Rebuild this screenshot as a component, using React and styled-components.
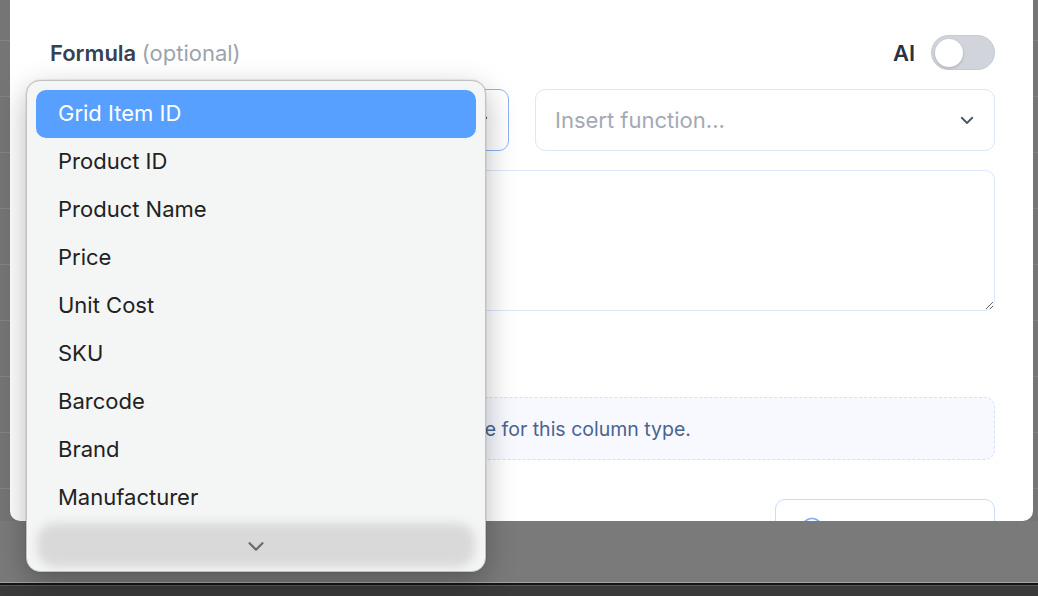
import React from "react";
import styled, { createGlobalStyle } from "styled-components";

const GlobalStyle = createGlobalStyle`
  html, body {
    margin: 0;
    padding: 0;
    background: #7a7a7a;
    font-family: Inter, "Noto Sans", "Liberation Sans", sans-serif;
  }
  * { box-sizing: border-box; }
`;

const Screen = styled.div`
  position: relative;
  width: 1038px;
  height: 596px;
  overflow: hidden;
  display: flex;
  flex-direction: column;
`;

const Backdrop = styled.div`
  flex: 1;
  display: flex;
  flex-direction: column;
  background: #7a7a7a;
`;

const GridRows = styled.div`
  height: 521px;
  flex-shrink: 0;
  display: flex;
  background-color: #757575;
  background-image: repeating-linear-gradient(
    to bottom,
    transparent 0px,
    transparent 40px,
    #838383 40px,
    #838383 41px,
    transparent 41px,
    transparent 56px
  );
`;

const Dock = styled.div`
  height: 14px;
  flex-shrink: 0;
  background: #3a3a3a;
  border-top: 1px solid #a4a4a4;
  box-shadow: inset 0 1px 0 #141414, inset 0 2px 0 #141414, inset 0 3px 0 #575757;
`;

const Modal = styled.div`
  margin-left: 10px;
  width: 1023px;
  height: 521px;
  background: #ffffff;
  border-radius: 0 0 10px 10px;
  padding: 35px 38px 0 40px;
  display: flex;
  flex-direction: column;
  overflow: hidden;

  & > * {
    flex-shrink: 0;
  }
`;

const HeaderRow = styled.div`
  display: flex;
  align-items: center;
  justify-content: space-between;
  height: 35px;
`;

const Label = styled.div`
  font-size: 22px;
  font-weight: 600;
  color: #374151;
`;

const Muted = styled.span`
  font-weight: 400;
  color: #9ca3af;
`;

const AiToggle = styled.div`
  display: flex;
  align-items: center;
  gap: 16px;
  font-size: 22px;
  font-weight: 600;
  color: #2b3140;
`;

const Switch = styled.div`
  width: 64px;
  height: 35px;
  border-radius: 18px;
  background: #d1d5db;
  border: 1px solid #c3cbd9;
  padding: 3px;
  display: flex;
  align-items: center;
`;

const Knob = styled.div`
  width: 28px;
  height: 28px;
  border-radius: 50%;
  background: #ffffff;
  box-shadow: 0 1px 3px rgba(0, 0, 0, 0.2);
`;

const SelectRow = styled.div`
  margin-top: 19px;
  display: grid;
  grid-template-columns: 459px 1fr;
  gap: 26px;
  height: 62px;
`;

const SelectBox = styled.div`
  border: 1px solid ${(p) => (p.$focused ? "#8fb4f4" : "#dbe6fb")};
  border-radius: 10px;
  display: flex;
  align-items: center;
  justify-content: space-between;
  padding: 0 18px 0 19px;
  font-size: 22px;
  color: ${(p) => (p.$placeholder ? "#a3a9b6" : "#1f2937")};
`;

const Chevron = ({ color = "#4b5563", size = 18 }) => (
  <svg width={size} height={size} viewBox="0 0 24 24" fill="none">
    <path d="M5 9l7 7 7-7" stroke={color} strokeWidth="2.4" strokeLinecap="round" strokeLinejoin="round" />
  </svg>
);

const FormulaInput = styled.textarea`
  margin-top: 19px;
  height: 141px;
  width: 100%;
  resize: vertical;
  border: 1px solid #dbe6fb;
  border-radius: 10px;
  padding: 14px 18px;
  font-family: "DejaVu Sans Mono", monospace;
  font-size: 16px;
  color: #1f2937;
  outline: none;
`;

const Spacer = styled.div`
  height: 86px;
`;

const InfoBox = styled.div`
  height: 63px;
  border: 1px dashed #d5e1f8;
  border-radius: 10px;
  background: #f7f9ff;
  display: flex;
  align-items: center;
  padding: 0 20px;
  font-size: 19.5px;
  color: #4a6390;
  white-space: nowrap;
`;

const Footer = styled.div`
  margin-top: 39px;
  display: flex;
  justify-content: flex-end;
`;

const GhostButton = styled.div`
  width: 220px;
  height: 58px;
  border: 1px solid #cddcf7;
  border-radius: 10px;
  display: flex;
  align-items: center;
  gap: 10px;
  padding: 0 0 0 25px;
  font-size: 18px;
  color: #3b5b94;
`;

const Menu = styled.div`
  position: absolute;
  left: 26px;
  top: 80px;
  width: 460px;
  height: 492px;
  border-radius: 14px;
  background: #f4f5f5;
  border: 1px solid #c2c2c2;
  box-shadow: 0 10px 30px rgba(0, 0, 0, 0.28), 0 0 0 0.5px rgba(0, 0, 0, 0.1);
  padding: 9px 9px 0 9px;
  overflow: hidden;
  font-family: Inter, "Noto Sans", sans-serif;
`;

const Option = styled.div`
  height: 48px;
  display: flex;
  align-items: center;
  padding: 0 0 3px 22px;
  font-size: 22px;
  border-radius: 10px;
  color: ${(p) => (p.$active ? "#ffffff" : "#222222")};
  background: ${(p) => (p.$active ? "#58a0ff" : "transparent")};
`;

const ScrollShade = styled.div`
  position: absolute;
  left: 0;
  right: 0;
  bottom: 0;
  height: 54px;
  display: flex;
  align-items: center;
  justify-content: center;
  padding-top: 4px;

  &::before {
    content: "";
    position: absolute;
    left: 10px;
    right: 10px;
    top: 6px;
    bottom: 4px;
    border-radius: 18px;
    background: #d9d9d9;
    filter: blur(5px);
  }
`;

const ScrollArrow = styled.div`
  position: relative;
  display: flex;
`;

const fields = [
  "Grid Item ID",
  "Product ID",
  "Product Name",
  "Price",
  "Unit Cost",
  "SKU",
  "Barcode",
  "Brand",
  "Manufacturer",
];

export default function App() {
  return (
    <>
      <GlobalStyle />
      <Screen>
        <Backdrop>
          <GridRows>
            <Modal>
              <HeaderRow>
                <Label>
                  Formula <Muted>(optional)</Muted>
                </Label>
                <AiToggle>
                  AI
                  <Switch>
                    <Knob />
                  </Switch>
                </AiToggle>
              </HeaderRow>

              <SelectRow>
                <SelectBox $focused>
                  <span />
                  <Chevron />
                </SelectBox>
                <SelectBox $placeholder>
                  Insert function...
                  <Chevron />
                </SelectBox>
              </SelectRow>

              <FormulaInput defaultValue="" spellCheck={false} />

              <Spacer />

              <InfoBox>Live preview of formula results is not available for this column type.</InfoBox>

              <Footer>
                <GhostButton>
                  <svg width="22" height="22" viewBox="0 0 24 24" fill="none">
                    <circle cx="12" cy="12" r="10.5" stroke="#8fb0ee" strokeWidth="2" />
                  </svg>
                  Test formula
                </GhostButton>
              </Footer>
            </Modal>
          </GridRows>
        </Backdrop>
        <Dock />

        <Menu>
          {fields.map((f, i) => (
            <Option key={f} $active={i === 0}>
              {f}
            </Option>
          ))}
          <ScrollShade>
            <ScrollArrow>
              <Chevron color="#6b6b6b" size={22} />
            </ScrollArrow>
          </ScrollShade>
        </Menu>
      </Screen>
    </>
  );
}
